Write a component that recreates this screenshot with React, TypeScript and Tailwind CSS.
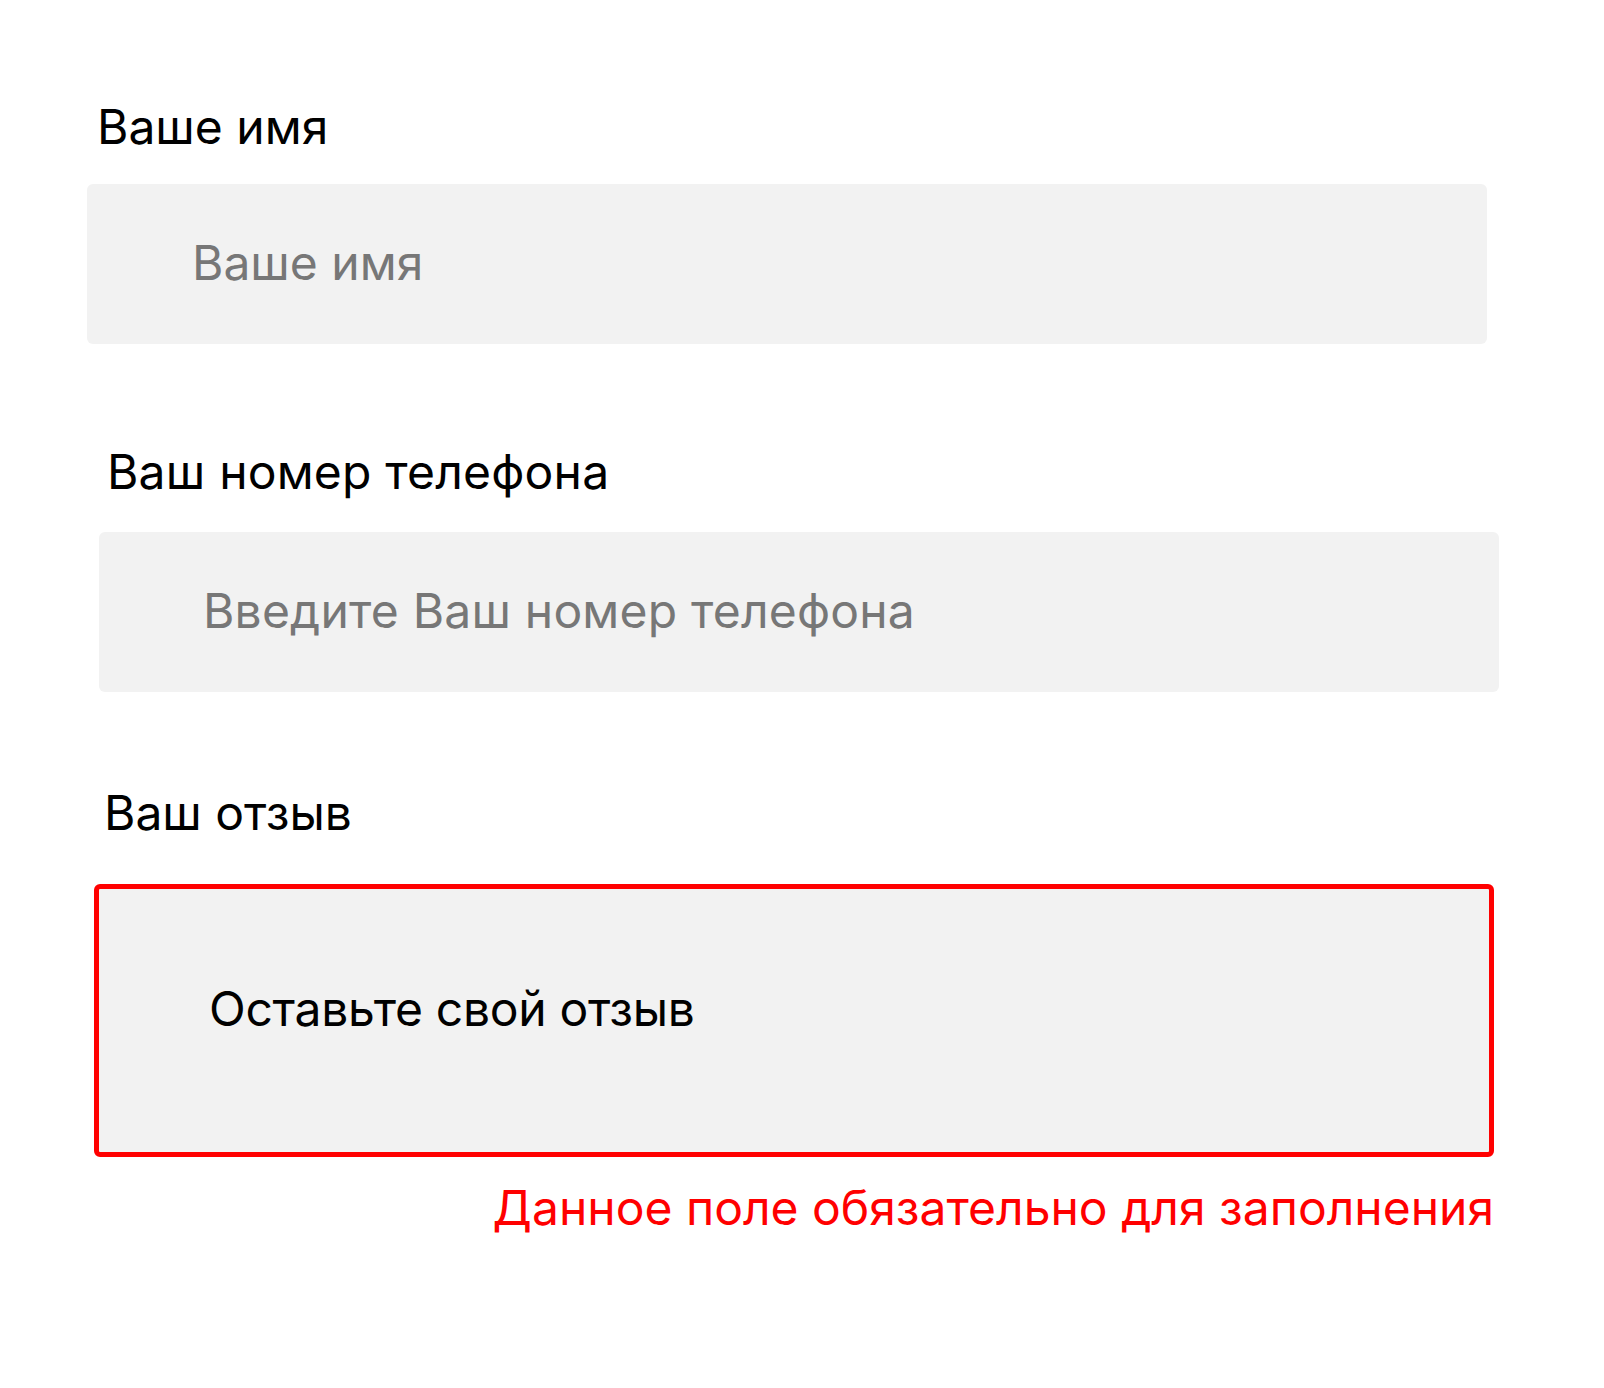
import React from 'react';

const FONT = "font-['Inter',sans-serif]";

export default function App() {
  return (
    <div className={`min-h-screen w-[1604px] bg-white ${FONT} pt-[98px]`}>
      {/* Name */}
      <div className="ml-[87px] w-[1400px]">
        <label className="block pl-[10px] text-[48px] leading-[58px] text-black">Ваше имя</label>
        <input
          type="text"
          placeholder="Ваше имя"
          className="mt-[28px] block h-[160px] w-full rounded-md bg-[#f2f2f2] pb-[4px] pl-[105px] text-[48px] leading-[58px] text-black outline-none placeholder:text-[#777777]"
        />
      </div>

      {/* Phone */}
      <div className="ml-[99px] mt-[99px] w-[1400px]">
        <label className="block pl-[8px] text-[48px] leading-[58px] tracking-[0.2px] text-black">Ваш номер телефона</label>
        <input
          type="tel"
          placeholder="Введите Ваш номер телефона"
          className="mt-[31px] block h-[160px] w-full rounded-md bg-[#f2f2f2] pb-[4px] pl-[104px] text-[48px] leading-[58px] tracking-[0.2px] text-black outline-none placeholder:text-[#777777]"
        />
      </div>

      {/* Review */}
      <div className="ml-[94px] mt-[92px] w-[1400px]">
        <label className="block pl-[10px] text-[48px] leading-[58px] text-black">Ваш отзыв</label>
        <textarea
          placeholder="Оставьте свой отзыв"
          className="mt-[42px] block h-[273px] w-full resize-none rounded-md border-[5px] border-[#ff0000] bg-[#f2f2f2] pl-[110px] pt-[91px] text-[48px] leading-[58px] tracking-[-0.3px] text-black outline-none placeholder:text-black"
        />
        <p className="mt-[22px] text-right text-[48px] leading-[58px] text-[#ff0000]">
          Данное поле обязательно для заполнения
        </p>
      </div>
    </div>
  );
}
